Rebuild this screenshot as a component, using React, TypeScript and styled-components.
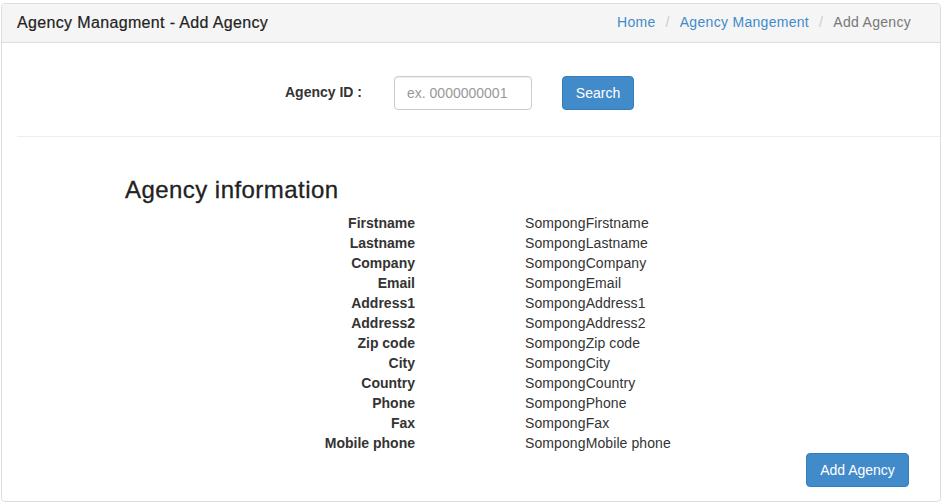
import { Fragment } from "react";
import styled, { createGlobalStyle } from "styled-components";

const GlobalStyle = createGlobalStyle`
    html, body {
        margin: 0;
        padding: 0;
        background: #fff;
    }
    body {
        font-family: "Liberation Sans", Arial, sans-serif;
        font-size: 14px;
        line-height: 1.42857;
        color: #333;
    }
    * {
        box-sizing: border-box;
    }
`

const Panel = styled.div`
    margin: 3px 2px 0 1px;
    height: 499px;
    border: 1px solid #ddd;
    border-radius: 4px;
    display: flex;
    flex-direction: column;
    overflow: hidden;
`

const PanelHeading = styled.div`
    flex-shrink: 0;
    height: 39px;
    padding: 0 15px;
    background: #f5f5f5;
    border-bottom: 1px solid #ddd;
    display: flex;
    align-items: center;
    justify-content: space-between;
`

const PanelTitle = styled.div`
    font-size: 16px;
    color: #222;
    letter-spacing: 0.35px;
    -webkit-text-stroke: 0.2px #222;
`

const Breadcrumb = styled.ol`
    list-style: none;
    margin: 0;
    padding: 0 14px;
    display: flex;
    font-size: 14px;
    letter-spacing: 0.3px;

    li + li::before {
        content: "/";
        padding: 0 10px 0 10px;
        color: #ccc;
    }
`

const Crumb = styled.li<{ $active?: boolean }>`
    color: ${p => p.$active ? '#777' : '#428bca'};
`

const PanelBody = styled.div`
    flex: 1;
    padding: 0 0 0 15px;
    display: flex;
    flex-direction: column;
`

const SearchRow = styled.form`
    display: flex;
    align-items: center;
    padding: 33px 0 0 268px;
`

const Label = styled.label`
    font-weight: 700;
    width: 109px;
`

const Input = styled.input`
    width: 138px;
    height: 34px;
    padding: 6px 12px;
    border: 1px solid #ccc;
    border-radius: 4px;
    font-family: inherit;
    font-size: 14px;
    color: #555;
    box-shadow: inset 0 1px 1px rgba(0, 0, 0, 0.075);

    &::placeholder {
        color: #999;
    }
`

const Button = styled.button<{ $width: number }>`
    width: ${p => p.$width}px;
    height: 34px;
    padding: 0;
    background: #428bca;
    border: 1px solid #357ebd;
    border-radius: 4px;
    color: #fff;
    font-family: inherit;
    font-size: 14px;
    cursor: pointer;
`

const SearchButton = styled(Button)`
    margin-left: 30px;
    margin-top: -1px;
`

const Divider = styled.hr`
    margin: 26px 0 0;
    border: 0;
    border-top: 1px solid #eee;
`

const Heading = styled.h3`
    margin: 40px 0 10px 108px;
    font-size: 24px;
    font-weight: 500;
    line-height: 1.1;
    color: #222;
    letter-spacing: 0.45px;
    -webkit-text-stroke: 0.3px #222;
`

const InfoList = styled.dl`
    margin: 0;
    display: grid;
    grid-template-columns: 398px 1fr;
    column-gap: 110px;
    line-height: 20px;
`

const Term = styled.dt`
    font-weight: 700;
    text-align: right;
`

const Value = styled.dd`
    margin: 0;
    letter-spacing: 0.1px;
`

const Actions = styled.div`
    display: flex;
    justify-content: flex-end;
    padding-right: 31px;
`

const fields: [string, string][] = [
    ['Firstname', 'SompongFirstname'],
    ['Lastname', 'SompongLastname'],
    ['Company', 'SompongCompany'],
    ['Email', 'SompongEmail'],
    ['Address1', 'SompongAddress1'],
    ['Address2', 'SompongAddress2'],
    ['Zip code', 'SompongZip code'],
    ['City', 'SompongCity'],
    ['Country', 'SompongCountry'],
    ['Phone', 'SompongPhone'],
    ['Fax', 'SompongFax'],
    ['Mobile phone', 'SompongMobile phone'],
]

export default function App() {
    return (
        <>
            <GlobalStyle />
            <Panel>
                <PanelHeading>
                    <PanelTitle>Agency Managment - Add Agency</PanelTitle>
                    <Breadcrumb>
                        <Crumb>Home</Crumb>
                        <Crumb>Agency Mangement</Crumb>
                        <Crumb $active>Add Agency</Crumb>
                    </Breadcrumb>
                </PanelHeading>
                <PanelBody>
                    <SearchRow onSubmit={e => e.preventDefault()}>
                        <Label htmlFor="agency-id">Agency ID :</Label>
                        <Input id="agency-id" placeholder="ex. 0000000001" />
                        <SearchButton $width={72} type="submit">Search</SearchButton>
                    </SearchRow>
                    <Divider />
                    <Heading>Agency information</Heading>
                    <InfoList>
                        {fields.map(([label, value]) => (
                            <Fragment key={label}>
                                <Term>{label}</Term>
                                <Value>{value}</Value>
                            </Fragment>
                        ))}
                    </InfoList>
                    <Actions>
                        <Button $width={103}>Add Agency</Button>
                    </Actions>
                </PanelBody>
            </Panel>
        </>
    )
}
